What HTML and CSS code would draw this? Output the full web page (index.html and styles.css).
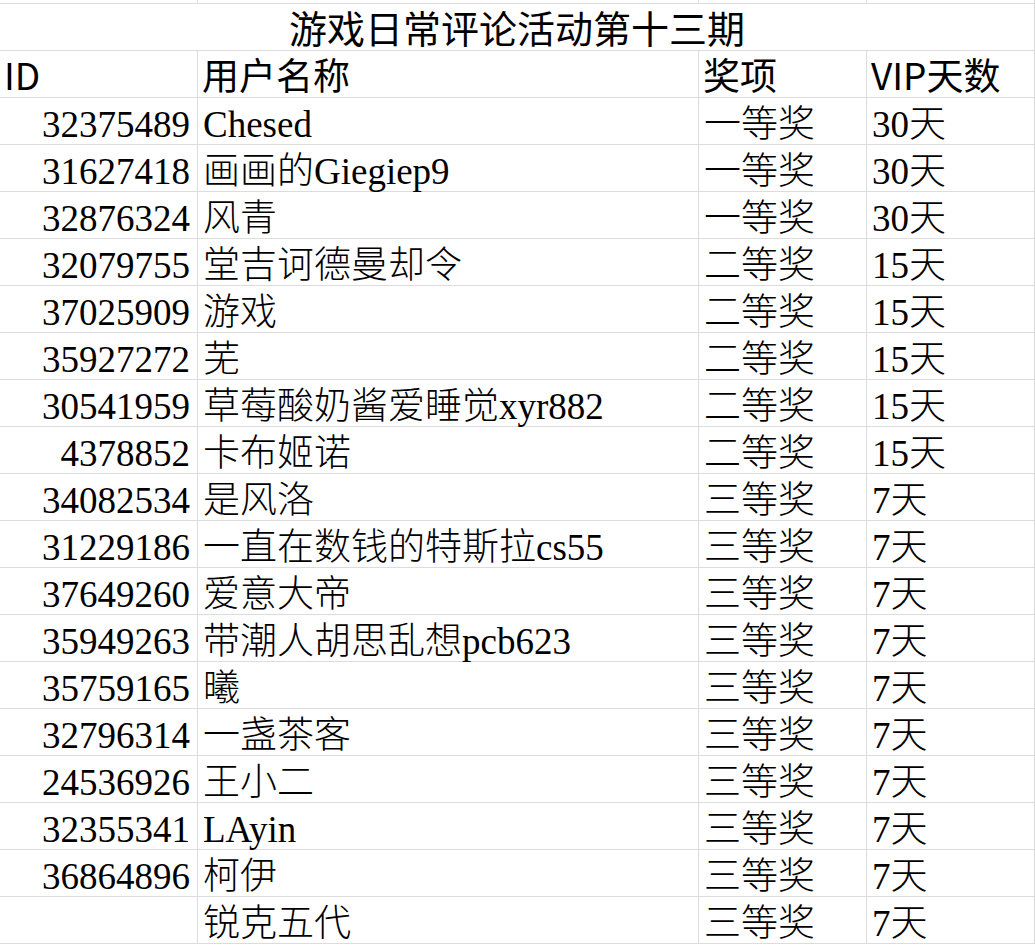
FILE: index.html
```html
<!DOCTYPE html>
<html lang="zh-CN">
<head>
<meta charset="utf-8">
<title>游戏日常评论活动第十三期</title>
<link rel="stylesheet" href="styles.css">
</head>
<body>
<div class="sheet">
  <div class="c"></div><div class="c"></div><div class="c"></div><div class="c"></div>

  <div class="c title">游戏日常评论活动第十三期</div>

  <div class="c head">ID</div><div class="c head">用户名称</div><div class="c head">奖项</div><div class="c head">VIP天数</div>

  <div class="c num">32375489</div><div class="c txt">Chesed</div><div class="c txt">一等奖</div><div class="c txt">30天</div>
  <div class="c num">31627418</div><div class="c txt">画画的Giegiep9</div><div class="c txt">一等奖</div><div class="c txt">30天</div>
  <div class="c num">32876324</div><div class="c txt">风青</div><div class="c txt">一等奖</div><div class="c txt">30天</div>
  <div class="c num">32079755</div><div class="c txt">堂吉诃德曼却令</div><div class="c txt">二等奖</div><div class="c txt">15天</div>
  <div class="c num">37025909</div><div class="c txt">游戏</div><div class="c txt">二等奖</div><div class="c txt">15天</div>
  <div class="c num">35927272</div><div class="c txt">芜</div><div class="c txt">二等奖</div><div class="c txt">15天</div>
  <div class="c num">30541959</div><div class="c txt">草莓酸奶酱爱睡觉xyr882</div><div class="c txt">二等奖</div><div class="c txt">15天</div>
  <div class="c num">4378852</div><div class="c txt">卡布姬诺</div><div class="c txt">二等奖</div><div class="c txt">15天</div>
  <div class="c num">34082534</div><div class="c txt">是风洛</div><div class="c txt">三等奖</div><div class="c txt">7天</div>
  <div class="c num">31229186</div><div class="c txt">一直在数钱的特斯拉cs55</div><div class="c txt">三等奖</div><div class="c txt">7天</div>
  <div class="c num">37649260</div><div class="c txt">爱意大帝</div><div class="c txt">三等奖</div><div class="c txt">7天</div>
  <div class="c num">35949263</div><div class="c txt">带潮人胡思乱想pcb623</div><div class="c txt">三等奖</div><div class="c txt">7天</div>
  <div class="c num">35759165</div><div class="c txt">曦</div><div class="c txt">三等奖</div><div class="c txt">7天</div>
  <div class="c num">32796314</div><div class="c txt">一盏茶客</div><div class="c txt">三等奖</div><div class="c txt">7天</div>
  <div class="c num">24536926</div><div class="c txt">王小二</div><div class="c txt">三等奖</div><div class="c txt">7天</div>
  <div class="c num">32355341</div><div class="c txt">LAyin</div><div class="c txt">三等奖</div><div class="c txt">7天</div>
  <div class="c num">36864896</div><div class="c txt">柯伊</div><div class="c txt">三等奖</div><div class="c txt">7天</div>
  <div class="c num"></div><div class="c txt">锐克五代</div><div class="c txt">三等奖</div><div class="c txt">7天</div>
</div>
</body>
</html>
```

FILE: styles.css
```css
html, body {
  margin: 0;
  padding: 0;
  background: #ffffff;
  height: 947px;
  overflow: hidden;
}

.sheet {
  display: grid;
  grid-template-columns: 198px 501px 168px 168px;
  grid-template-rows: 4px repeat(20, 47px) 4px;
  width: 1035px;
  color: #000000;
}

.c {
  box-sizing: border-box;
  border-right: 1px solid #dcdcdc;
  border-bottom: 1px solid #dcdcdc;
  display: flex;
  align-items: flex-end;
  white-space: nowrap;
  min-width: 0;
}

.title {
  grid-column: 1 / -1;
  justify-content: center;
  font-family: "Noto Sans CJK SC", "Noto Sans", sans-serif;
  font-size: 38px;
  line-height: 40px;
  padding-bottom: 3px;
}

.head {
  font-family: "Noto Sans CJK SC", "Noto Sans", sans-serif;
  font-size: 37px;
  line-height: 39px;
  padding-left: 4px;
  padding-bottom: 3px;
}

.num,
.txt {
  font-family: "Liberation Serif", "Noto Sans CJK SC", serif;
  font-size: 37px;
  font-weight: 300;
  line-height: 39px;
}

.num {
  justify-content: flex-end;
  padding-right: 7px;
}

.txt {
  padding-left: 5px;
}
```
